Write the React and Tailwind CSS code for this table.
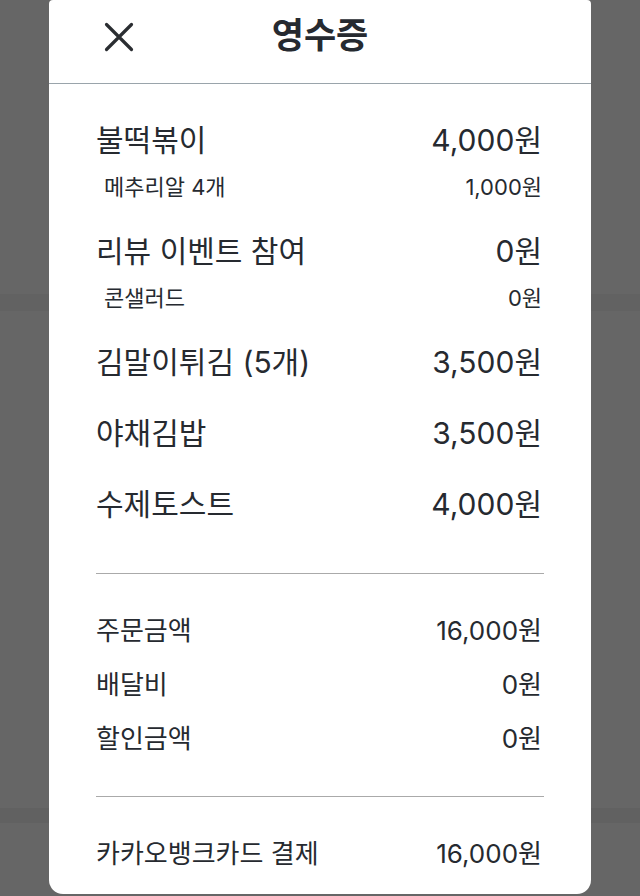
import React from 'react';

const items = [
    { name: '불떡볶이', price: '4,000원', sub: { name: '메추리알 4개', price: '1,000원' } },
    { name: '리뷰 이벤트 참여', price: '0원', sub: { name: '콘샐러드', price: '0원' } },
    { name: '김말이튀김 (5개)', price: '3,500원' },
    { name: '야채김밥', price: '3,500원' },
    { name: '수제토스트', price: '4,000원' },
];

const summary = [
    { label: '주문금액', value: '16,000원' },
    { label: '배달비', value: '0원' },
    { label: '할인금액', value: '0원' },
];

const font = { fontFamily: 'Inter, "Noto Sans CJK KR", sans-serif' };

const Row = ({ label, value, className }) => (
    <div className={`flex items-center justify-between pr-[2px] ${className}`}>
        <span>{label}</span>
        <span>{value}</span>
    </div>
);

const App = () => {
    return (
        <div className="relative h-[896px] w-[640px] overflow-hidden bg-[#666666]" style={font}>
            {/* dimmed page behind the sheet */}
            <div className="flex flex-col">
                <div className="h-[294px]" />
                <div className="h-[17px] bg-[#626262]" />
                <div className="h-[497px]" />
                <div className="h-[15px] bg-[#616161]" />
            </div>

            <div className="absolute left-[49px] top-0 w-[542px] h-[894px] bg-white rounded-t-[4px] rounded-b-[14px] text-[#262a30]">
                <div className="relative flex h-[84px] items-center justify-center border-b border-[#9aa4ab]">
                    <button className="absolute left-[55px] top-[22px]">
                        <svg width="30" height="30" viewBox="0 0 30 30" fill="none" stroke="#2a2d31" strokeWidth="3.2" strokeLinecap="round">
                            <path d="M2.5 2.5L27.5 27.5M27.5 2.5L2.5 27.5" />
                        </svg>
                    </button>
                    <h1 className="text-[35px] font-bold leading-none -mt-[12px]">영수증</h1>
                </div>

                <div className="px-[47px]">
                    <div className="flex flex-col gap-[30px] pt-[36px] pb-[48px] border-b border-[#aaaaaa]">
                        {items.map(item => (
                            <div key={item.name}>
                                <Row label={item.name} value={item.price} className="text-[30px] leading-[41px]" />
                                {item.sub && (
                                    <Row
                                        label={item.sub.name}
                                        value={item.sub.price}
                                        className="mt-3 pl-2 text-[22px] leading-[28px]"
                                    />
                                )}
                            </div>
                        ))}
                    </div>

                    <div className="py-[30px] border-b border-[#aaaaaa]">
                        {summary.map(s => (
                            <Row key={s.label} label={s.label} value={s.value} className="text-[26px] leading-[54px]" />
                        ))}
                    </div>

                    <div className="pt-[30px]">
                        <Row label="카카오뱅크카드 결제" value="16,000원" className="text-[26px] leading-[54px]" />
                    </div>
                </div>
            </div>
        </div>
    );
};

export default App;
